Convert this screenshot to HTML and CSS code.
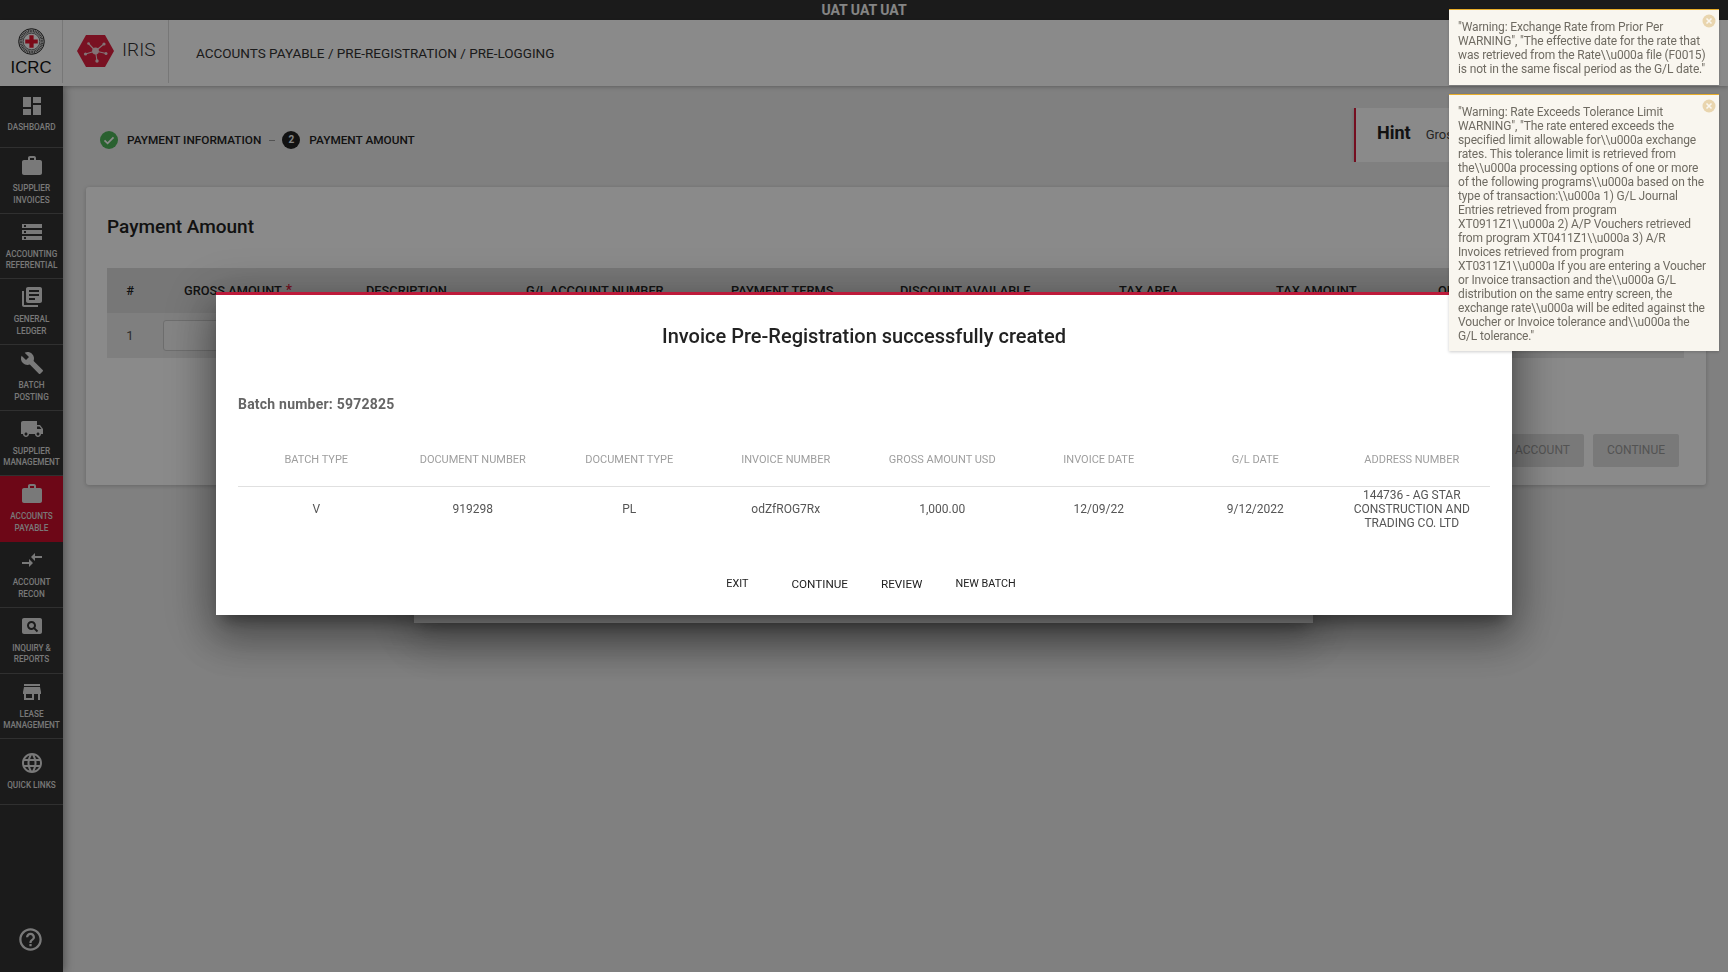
FILE: index.html
```html
<!DOCTYPE html>
<html lang="en">
<head>
<meta charset="utf-8">
<title>IRIS - Pre-Logging</title>
<link rel="stylesheet" href="styles.css">
</head>
<body>
<div class="app">
  <div class="topbar">UAT UAT UAT</div>
  <header class="header">
    <div class="brand-icrc">
      <svg class="seal" viewBox="0 0 28 28" width="27" height="27">
        <circle cx="14" cy="14" r="13.300" fill="#d8d8d8" stroke="#222" stroke-width="1"/>
        <circle cx="14" cy="14" r="10.900" fill="none" stroke="#444" stroke-width="2.600" stroke-dasharray=".8 .9"/>
        <circle cx="14" cy="14" r="8.600" fill="#fff" stroke="#222" stroke-width=".6"/>
        <path d="M11.800 7.500h4.400v4.300h4.300v4.400h-4.300v4.300h-4.400v-4.300H7.500v-4.400h4.300z" fill="#e3142d"/>
      </svg>
      <span class="icrc-name">ICRC</span>
    </div>
    <div class="brand-iris">
      <svg class="hex" viewBox="0 0 37 32" width="37" height="32">
        <path d="M9 0h19l9 16-9 16H9L0 16z" fill="#e0203f"/>
        <g stroke="#f2d5da" stroke-width="1.100">
          <path d="M18.500 16L8.500 19M18.500 16L11.500 8.500M18.500 16L27 9M18.500 16L29 18.500M18.500 16L20 26"/>
        </g>
        <g fill="#f2d5da">
          <circle cx="18.500" cy="16" r="3.400"/>
          <circle cx="8.500" cy="19" r="1.600"/>
          <circle cx="11.500" cy="8.500" r="1.300"/>
          <circle cx="27" cy="9" r="1.600"/>
          <circle cx="29" cy="18.500" r="1.500"/>
          <circle cx="20" cy="26" r="1.700"/>
        </g>
      </svg>
      <span class="iris-name">IRIS</span>
    </div>
    <div class="crumbs">ACCOUNTS PAYABLE / PRE-REGISTRATION / PRE-LOGGING</div>
  </header>
  <div class="body-row">
    <nav class="sidebar">
      <a class="nav-item nav-first"><svg viewBox="0 0 24 24"><path d="M3 13h8V3H3v10zm0 8h8v-6H3v6zm10 0h8V11h-8v10zm0-18v6h8V3h-8z"/></svg><span>DASHBOARD</span></a>
      <a class="nav-item"><svg viewBox="0 0 24 24"><path d="M20 6h-4V4c0-1.110-.89-2-2-2h-4c-1.110 0-2 .89-2 2v2H4c-1.110 0-1.990.89-1.990 2L2 19c0 1.110.89 2 2 2h16c1.110 0 2-.89 2-2V8c0-1.110-.89-2-2-2zm-6 0h-4V4h4v2z"/></svg><span>SUPPLIER<br>INVOICES</span></a>
      <a class="nav-item"><svg viewBox="0 0 24 24"><path d="M2 20h20v-4H2v4zm2-3h2v2H4v-2zM2 4v4h20V4H2zm4 3H4V5h2v2zm-4 7h20v-4H2v4zm2-3h2v2H4v-2z"/></svg><span>ACCOUNTING<br>REFERENTIAL</span></a>
      <a class="nav-item"><svg viewBox="0 0 24 24"><path d="M4 6H2v14c0 1.100.9 2 2 2h14v-2H4V6zm16-4H8c-1.100 0-2 .9-2 2v12c0 1.100.9 2 2 2h12c1.100 0 2-.9 2-2V4c0-1.100-.9-2-2-2zm-1 9H9V9h10v2zm-4 4H9v-2h6v2zm4-8H9V5h10v2z"/></svg><span>GENERAL<br>LEDGER</span></a>
      <a class="nav-item"><svg viewBox="0 0 24 24"><path d="M22.700 19l-9.100-9.100c.9-2.300.4-5-1.500-6.900-2-2-5-2.400-7.400-1.300L9 6 6 9 1.600 4.700C.4 7.100.9 10.100 2.900 12.100c1.900 1.900 4.600 2.400 6.900 1.500l9.100 9.100c.4.4 1 .4 1.400 0l2.300-2.300c.5-.4.5-1.100.1-1.400z"/></svg><span>BATCH<br>POSTING</span></a>
      <a class="nav-item"><svg viewBox="0 0 24 24"><path d="M20 8h-3V4H3c-1.100 0-2 .9-2 2v11h2c0 1.660 1.340 3 3 3s3-1.340 3-3h6c0 1.660 1.340 3 3 3s3-1.340 3-3h2v-5l-3-4zM6 18.500c-.83 0-1.500-.67-1.500-1.500s.67-1.500 1.500-1.500 1.500.67 1.500 1.500-.67 1.500-1.500 1.500zm13.500-9l1.960 2.500H17V9.500h2.500zm-1.500 9c-.83 0-1.500-.67-1.500-1.500s.67-1.500 1.500-1.500 1.500.67 1.500 1.500-.67 1.500-1.500 1.500z"/></svg><span>SUPPLIER<br>MANAGEMENT</span></a>
      <a class="nav-item nav-active"><svg viewBox="0 0 24 24"><path d="M20 6h-4V4c0-1.110-.89-2-2-2h-4c-1.110 0-2 .89-2 2v2H4c-1.110 0-1.990.89-1.990 2L2 19c0 1.110.89 2 2 2h16c1.110 0 2-.89 2-2V8c0-1.110-.89-2-2-2zm-6 0h-4V4h4v2z"/></svg><span>ACCOUNTS<br>PAYABLE</span></a>
      <a class="nav-item"><svg viewBox="0 0 24 24"><path d="M9.010 14H2v2h7.010v3L13 15l-3.990-4v3zm5.980-1v-3H22V8h-7.010V5L11 9l3.990 4z"/></svg><span>ACCOUNT<br>RECON</span></a>
      <a class="nav-item"><svg viewBox="0 0 24 24"><path d="M11.500 9C10.120 9 9 10.120 9 11.500s1.120 2.500 2.500 2.500 2.500-1.120 2.500-2.500S12.880 9 11.500 9zM20 4H4c-1.100 0-2 .9-2 2v12c0 1.100.9 2 2 2h16c1.100 0 2-.9 2-2V6c0-1.100-.9-2-2-2zm-3.210 14.210l-2.910-2.910c-.69.44-1.510.7-2.380.7C9.010 16 7 13.990 7 11.500S9.010 7 11.500 7 16 9.010 16 11.500c0 .88-.26 1.690-.7 2.390l2.910 2.900-1.420 1.420z"/></svg><span>INQUIRY &amp;<br>REPORTS</span></a>
      <a class="nav-item"><svg viewBox="0 0 24 24"><path d="M20 4H4v2h16V4zm1 10v-2l-1-5H4l-1 5v2h1v6h10v-6h4v6h2v-6h1zm-9 4H6v-4h6v4z"/></svg><span>LEASE<br>MANAGEMENT</span></a>
      <a class="nav-item nav-quick"><svg viewBox="0 0 24 24"><path d="M11.990 2C6.470 2 2 6.480 2 12s4.470 10 9.990 10C17.520 22 22 17.520 22 12S17.520 2 11.990 2zm6.930 6h-2.950c-.32-1.250-.78-2.450-1.380-3.560 1.840.63 3.370 1.910 4.330 3.560zM12 4.040c.83 1.200 1.480 2.530 1.910 3.960h-3.820c.43-1.430 1.080-2.760 1.910-3.960zM4.260 14C4.100 13.360 4 12.690 4 12s.1-1.360.26-2h3.380c-.08.66-.14 1.320-.14 2 0 .68.06 1.340.14 2H4.260zm.82 2h2.950c.32 1.250.78 2.450 1.380 3.560-1.840-.63-3.370-1.900-4.330-3.560zm2.950-8H5.080c.96-1.660 2.490-2.930 4.330-3.560C8.810 5.550 8.350 6.750 8.030 8zM12 19.960c-.83-1.200-1.480-2.530-1.910-3.960h3.820c-.43 1.430-1.080 2.760-1.910 3.960zM14.340 14H9.660c-.09-.66-.16-1.320-.16-2 0-.68.07-1.350.16-2h4.680c.09.65.16 1.320.16 2 0 .68-.07 1.340-.16 2zm.25 5.560c.6-1.110 1.060-2.310 1.380-3.560h2.950c-.96 1.650-2.490 2.930-4.330 3.560zM16.360 14c.08-.66.14-1.320.14-2 0-.68-.06-1.340-.14-2h3.380c.16.64.26 1.310.26 2s-.1 1.360-.26 2h-3.380z"/></svg><span>QUICK LINKS</span></a>
      <a class="nav-help"><svg viewBox="0 0 24 24"><path d="M11 18h2v-2h-2v2zm1-16C6.480 2 2 6.480 2 12s4.480 10 10 10 10-4.480 10-10S17.520 2 12 2zm0 18c-4.410 0-8-3.590-8-8s3.590-8 8-8 8 3.590 8 8-3.590 8-8 8zm0-14c-2.210 0-4 1.790-4 4h2c0-1.100.9-2 2-2s2 .9 2 2c0 2-3 1.750-3 5h2c0-2.250 3-2.500 3-5 0-2.210-1.790-4-4-4z"/></svg></a>
    </nav>
    <main class="content">
      <div class="step-row">
        <div class="stepper">
          <svg class="step-check" viewBox="0 0 18 18" width="18" height="18"><circle cx="9" cy="9" r="9" fill="#4fb35a"/><path d="M4.500 9.300l3.100 3 5.900-6" fill="none" stroke="#fff" stroke-width="1.700"/></svg>
          <span class="step-label">PAYMENT INFORMATION</span>
          <span class="step-sep"></span>
          <span class="step-num">2</span>
          <span class="step-label">PAYMENT AMOUNT</span>
        </div>
        <aside class="hint"><strong class="hint-title">Hint</strong><span class="hint-text">Gross amount must be entered</span></aside>
      </div>
      <section class="card">
        <h2 class="card-title">Payment Amount</h2>
        <div class="grid grid-head">
          <div class="cell-num">#</div>
          <div class="cell-gross">GROSS AMOUNT <i class="req">*</i></div>
          <div>DESCRIPTION</div>
          <div>G/L ACCOUNT NUMBER</div>
          <div>PAYMENT TERMS</div>
          <div>DISCOUNT AVAILABLE</div>
          <div>TAX AREA</div>
          <div>TAX AMOUNT</div>
          <div>OPEN AMOUNT</div>
        </div>
        <div class="grid grid-row">
          <div class="cell-num">1</div>
          <div class="cell-input"><span class="fake-input"></span></div>
        </div>
        <div class="card-actions">
          <span class="btn">BANK ACCOUNT</span>
          <span class="btn">CONTINUE</span>
        </div>
      </section>
    </main>
  </div>
</div>

<div class="backdrop"></div>
<div class="dialog-behind"></div>

<div class="dialog">
  <h1 class="dialog-title">Invoice Pre-Registration successfully created</h1>
  <p class="batch">Batch number: 5972825</p>
  <div class="result result-head">
    <div>BATCH TYPE</div><div>DOCUMENT NUMBER</div><div>DOCUMENT TYPE</div><div>INVOICE NUMBER</div><div>GROSS AMOUNT USD</div><div>INVOICE DATE</div><div>G/L DATE</div><div>ADDRESS NUMBER</div>
  </div>
  <div class="result result-row">
    <div>V</div><div>919298</div><div>PL</div><div>odZfROG7Rx</div><div>1,000.00</div><div>12/09/22</div><div>9/12/2022</div><div>144736 - AG STAR<br>CONSTRUCTION AND<br>TRADING CO. LTD</div>
  </div>
  <div class="dialog-actions">
    <span class="act act-small act-exit">EXIT</span>
    <span class="act">CONTINUE</span>
    <span class="act">REVIEW</span>
    <span class="act act-small">NEW BATCH</span>
  </div>
</div>

<div class="toasts">
  <div class="toast">
    <svg class="toast-x" viewBox="0 0 14 14" width="14" height="14"><circle cx="7" cy="7" r="6.500" fill="#e9d5ae"/><path d="M4.500 4.500l5 5M9.500 4.500l-5 5" stroke="#faf7f0" stroke-width="1.600"/></svg>
    "Warning: Exchange Rate from Prior Per<br>WARNING", "The effective date for the rate that<br>was retrieved from the Rate\\u000a file (F0015)<br>is not in the same fiscal period as the G/L date."
  </div>
  <div class="toast">
    <svg class="toast-x" viewBox="0 0 14 14" width="14" height="14"><circle cx="7" cy="7" r="6.500" fill="#e9d5ae"/><path d="M4.500 4.500l5 5M9.500 4.500l-5 5" stroke="#faf7f0" stroke-width="1.600"/></svg>
    "Warning: Rate Exceeds Tolerance Limit<br>WARNING", "The rate entered exceeds the<br>specified limit allowable for\\u000a exchange<br>rates. This tolerance limit is retrieved from<br>the\\u000a processing options of one or more<br>of the following programs\\u000a based on the<br>type of transaction:\\u000a 1) G/L Journal<br>Entries retrieved from program<br>XT0911Z1\\u000a 2) A/P Vouchers retrieved<br>from program XT0411Z1\\u000a 3) A/R<br>Invoices retrieved from program<br>XT0311Z1\\u000a If you are entering a Voucher<br>or Invoice transaction and the\\u000a G/L<br>distribution on the same entry screen, the<br>exchange rate\\u000a will be edited against the<br>Voucher or Invoice tolerance and\\u000a the<br>G/L tolerance."
  </div>
</div>
</body>
</html>
```
FILE: styles.css
```css
* { box-sizing: border-box; }
html, body { margin: 0; padding: 0; height: 100%; overflow: hidden; }
body { font-family: Roboto, "Liberation Sans", sans-serif; background: #ececec; color: #222; }

.app { width: 1728px; height: 972px; display: flex; flex-direction: column; overflow: hidden; isolation: isolate; }

.topbar { height: 20px; flex: none; background: #333; color: #f5f5f5; font-size: 14px; font-weight: 700; line-height: 20px; text-align: center; }

.header { height: 66px; flex: none; background: #fff; display: flex; align-items: stretch; position: relative; z-index: 2; box-shadow: 0 1px 4px rgba(0,0,0,.25); }
.brand-icrc { width: 63px; margin-bottom: 3px; border-right: 1px solid #ddd; display: flex; flex-direction: column; align-items: center; padding-top: 8px; }
.seal { display: block; }
.icrc-name { font-family: "Liberation Sans", Arial, sans-serif; font-size: 16.800px; line-height: 20px; color: #111; margin-top: 3px; }
.brand-iris { width: 106px; margin-bottom: 3px; border-right: 1px solid #ddd; display: flex; align-items: flex-start; padding: 15px 0 0 14px; gap: 8px; }
.hex { display: block; }
.iris-name { font-size: 19px; font-weight: 300; line-height: 30px; color: #333; }
.crumbs { font-size: 13.500px; color: #333; line-height: 20px; padding: 23px 0 0 27px; }

.body-row { flex: 1; display: flex; min-height: 0; }

.sidebar { width: 63px; flex: none; background: #333; display: flex; flex-direction: column; position: relative; z-index: 1; box-shadow: 2px 0 8px rgba(0,0,0,.35); }
.nav-item { height: 65.700px; flex: none; border-bottom: 1px solid #5a5a5a; display: flex; flex-direction: column; align-items: center; padding-top: 6px; color: #dedede; font-size: 8.200px; font-weight: 500; line-height: 11.500px; text-align: center; white-space: nowrap; }
.nav-item svg { width: 24px; height: 24px; fill: #e0e0e0; flex: none; margin-bottom: 5px; }
.nav-first { height: 62px; padding-top: 8px; }
.nav-first svg { margin-bottom: 4px; }
.nav-quick { padding-top: 12px; }
.nav-active { background: #ca0d2c; border-bottom-color: #ca0d2c; }
.nav-help { margin-top: auto; height: 46.500px; display: flex; justify-content: center; padding-right: 3px; }
.nav-help svg { width: 27px; height: 27px; fill: #e0e0e0; }

.content { flex: 1; min-width: 0; }

.step-row { display: flex; align-items: center; height: 54px; margin-top: 22px; padding-left: 37px; overflow: hidden; }
.stepper { display: flex; align-items: center; font-size: 11.800px; font-weight: 500; color: #222; margin-top: 10px; }
.step-check { display: block; margin-right: 9px; }
.step-sep { width: 6px; height: 1px; background: #9a9a9a; margin: 0 7px 0 8px; }
.step-label { line-height: 18px; }
.step-num { width: 18px; height: 18px; border-radius: 50%; background: #222; color: #f4f4f4; font-size: 10px; font-weight: 700; line-height: 18px; text-align: center; margin-right: 9px; }
.hint { margin-left: auto; margin-right: 30px; width: 344px; height: 54px; background: #fff; border-left: 2px solid #d81b3c; box-shadow: 0 1px 4px rgba(0,0,0,.2); display: flex; align-items: center; padding-left: 21px; }
.hint-title { font-size: 18px; font-weight: 700; color: #222; margin: 0 15px 5px 0; }
.hint-text { font-size: 13px; color: #444; white-space: nowrap; margin-bottom: 2px; }

.card { height: 298px; margin: 25px 22px 0 23px; padding: 0 22px 0 21px; background: #fff; border-radius: 3px; box-shadow: 0 1px 4px rgba(0,0,0,.2); }
.card-title { margin: 0; padding-top: 28px; height: 81px; font-size: 19px; font-weight: 500; line-height: 24px; color: #222; }

.grid { display: grid; grid-template-columns: 46px 213px 160px 205px 169px 219px 157px 162px 1fr; }
.grid-head { height: 45px; background: #dcdcdc; font-size: 12.800px; font-weight: 500; color: #222; line-height: 45px; white-space: nowrap; }
.grid-row { height: 45px; background: #eaeaea; align-items: center; font-size: 13px; color: #555; }
.cell-num { text-align: center; }
.cell-gross { padding-left: 31px; }
.req { color: #d81b3c; font-style: normal; font-size: 14px; margin-left: 1px; }
.cell-input { grid-column: 2 / 6; padding: 0 0 0 10px; }
.fake-input { display: block; width: 300px; height: 31px; background: #f4f4f4; border: 1px solid #ccc; border-radius: 3px; }

.card-actions { display: flex; justify-content: flex-end; gap: 9px; margin-top: 76px; padding-right: 5px; }
.btn { height: 33px; padding: 0 14px; background: #e0e0e0; color: #9a9a9a; border-radius: 2px; font-size: 12px; line-height: 33px; }

.backdrop { position: fixed; inset: 0; background: rgba(0,0,0,.46); }

.dialog-behind { position: fixed; left: 414px; top: 400px; width: 899px; height: 223px; background: #a8a8a8; box-shadow: 0 11px 15px -7px rgba(0,0,0,.2), 0 24px 38px 3px rgba(0,0,0,.14), 0 9px 46px 8px rgba(0,0,0,.12); }

.dialog { position: fixed; left: 216px; top: 292px; width: 1296px; height: 323px; background: #fff; border-top: 3px solid #bd1b3b; padding: 0 22px; box-shadow: 0 11px 15px -7px rgba(0,0,0,.4), 0 24px 38px 3px rgba(0,0,0,.25), 0 9px 46px 8px rgba(0,0,0,.25); }
.dialog-title { margin: 27px 0 0; font-size: 20px; font-weight: 500; line-height: 28px; text-align: center; color: #222; }
.batch { margin: 44px 0 0; font-size: 14px; font-weight: 700; line-height: 20px; color: #666; letter-spacing: .22px; }
.result { display: grid; grid-template-columns: repeat(8, 1fr); text-align: center; }
.result-head { margin-top: 35px; height: 38px; font-size: 11px; line-height: 22px; color: #9e9e9e; border-bottom: 1px solid #e0e0e0; }
.result-row { height: 44px; align-items: center; font-size: 12px; line-height: 14px; color: #555; }
.dialog-actions { display: flex; justify-content: center; align-items: center; margin-top: 33px; height: 40px; padding-left: 14px; font-size: 11.700px; color: #222; }
.act { padding: 0 16.500px; line-height: 40px; }
.act-small { font-size: 10.800px; }
.act-exit { margin-right: 10px; }

.toasts { position: fixed; top: 9px; right: 9px; width: 270px; display: flex; flex-direction: column; gap: 9px; }
.toast { position: relative; background: #f9f6ef; border-top: 1px solid #e8ad2a; padding: 10px 0 9px 9px; font-size: 12px; line-height: 14px; color: #6f6b62; letter-spacing: -.14px; white-space: nowrap; box-shadow: 0 1px 3px rgba(0,0,0,.2); }
.toast + .toast { padding-bottom: 8px; }
.toast-x { position: absolute; top: 4px; right: 3px; display: block; }
```
